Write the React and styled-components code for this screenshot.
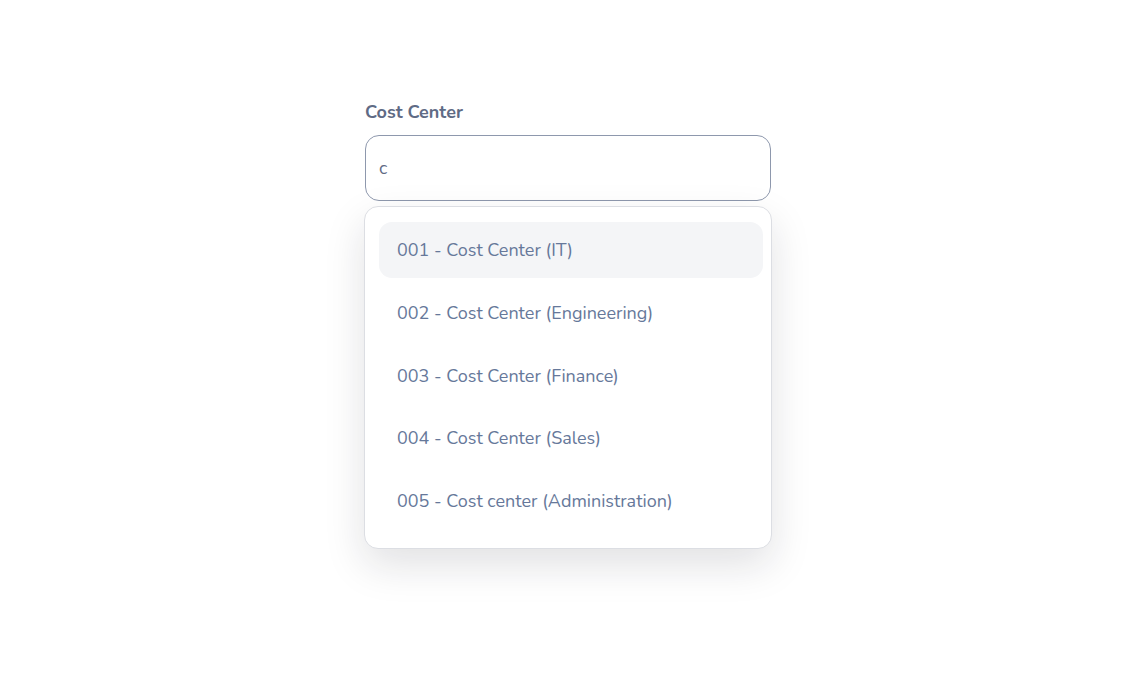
import React, { useState } from 'react'
import styled, { createGlobalStyle } from 'styled-components'

const GlobalStyle = createGlobalStyle`
  html, body {
    margin: 0;
    padding: 0;
    background: #ffffff;
    font-family: "Nunito", Lato, "Noto Sans", sans-serif;
  }
`

const Page = styled.div`
  width: 100%;
  min-height: 681px;
  display: flex;
  justify-content: center;
  padding-top: 101px;
  box-sizing: border-box;
`

const Field = styled.div`
  width: 407px;
  display: flex;
  flex-direction: column;
  margin-left: 3px;
`

const Label = styled.label`
  font-size: 18px;
  font-weight: 700;
  color: #5f6b85;
  line-height: 22px;
  margin-bottom: 12px;
`

const Input = styled.input`
  box-sizing: border-box;
  width: 406px;
  height: 66px;
  border: 1px solid #8e98ad;
  border-radius: 14px;
  padding: 0 13px;
  font-family: inherit;
  font-size: 18px;
  color: #5f6b85;
  outline: none;
  background: #fff;
`

const Menu = styled.ul`
  list-style: none;
  margin: 5px 0 0 -1px;
  padding: 15px 8px 19px 14px;
  box-sizing: border-box;
  width: 408px;
  border: 1px solid #dcdee3;
  border-radius: 14px;
  background: #fff;
  box-shadow: 0 16px 40px rgba(20, 25, 40, 0.13);
  display: flex;
  flex-direction: column;
  gap: 6.75px;
`

const Option = styled.li`
  height: 56px;
  display: flex;
  align-items: center;
  padding: 0 18px;
  border-radius: 13px;
  font-size: 18px;
  color: #66789a;
  background: ${p => (p.$active ? '#f4f5f7' : 'transparent')};
  cursor: pointer;
`

const options = [
  '001 - Cost Center (IT)',
  '002 - Cost Center (Engineering)',
  '003 - Cost Center (Finance)',
  '004 - Cost Center (Sales)',
  '005 - Cost center (Administration)',
]

export default function App() {
  const [value, setValue] = useState('c')
  const [active, setActive] = useState(0)

  return (
    <>
      <GlobalStyle />
      <Page>
        <Field>
          <Label>Cost Center</Label>
          <Input value={value} onChange={e => setValue(e.target.value)} />
          <Menu>
            {options.map((o, i) => (
              <Option key={o} $active={i === active} onMouseEnter={() => setActive(i)}>
                {o}
              </Option>
            ))}
          </Menu>
        </Field>
      </Page>
    </>
  )
}
